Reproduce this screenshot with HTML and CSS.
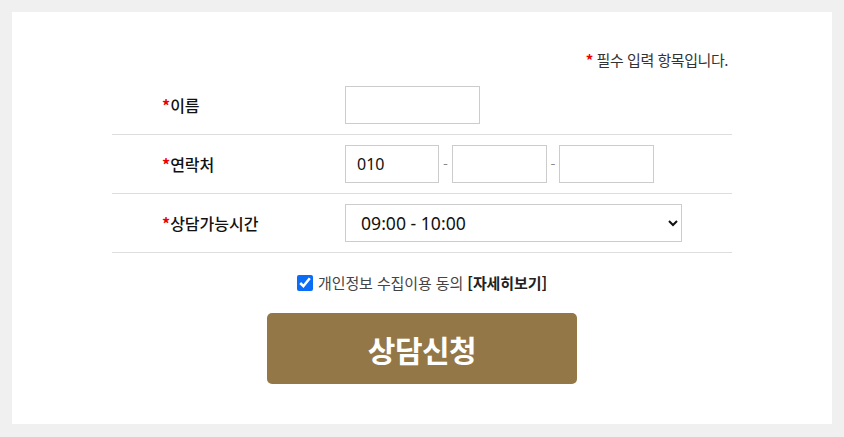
FILE: index.html
```html
<!DOCTYPE html>
<html lang="ko">
<head>
<meta charset="utf-8">
<link rel="stylesheet" href="styles.css">
</head>
<body>
<div class="panel">
  <div class="form">
    <p class="note"><span class="star">*</span> 필수 입력 항목입니다.</p>
    <div class="row">
      <div class="label"><span class="star">*</span>이름</div>
      <div class="field"><input class="inp name" type="text"></div>
    </div>
    <div class="row">
      <div class="label"><span class="star">*</span>연락처</div>
      <div class="field">
        <input class="inp tel first" type="text" value="010">
        <span class="dash">-</span>
        <input class="inp tel" type="text">
        <span class="dash last">-</span>
        <input class="inp tel" type="text">
      </div>
    </div>
    <div class="row">
      <div class="label"><span class="star">*</span>상담가능시간</div>
      <div class="field">
        <select class="sel"><option>09:00 - 10:00</option></select>
      </div>
    </div>
    <div class="agree">
      <input type="checkbox" class="chk" checked>
      <span>개인정보 수집이용 동의 <b>[자세히보기]</b></span>
    </div>
    <div class="btnwrap"><button class="submit">상담신청</button></div>
  </div>
</div>
</body>
</html>
```
FILE: styles.css
```css
* { box-sizing: border-box; }
html, body { margin: 0; padding: 0; }
body {
  background: #f0f0f0;
  padding: 12px;
  font-family: "Noto Sans CJK KR", "Noto Sans", sans-serif;
  color: #222;
}
.panel {
  background: #fff;
  width: 820px;
  height: 412px;
  padding: 36px 100px 0;
}
.form { width: 620px; }
.note {
  margin: 0 4px 4px 0;
  text-align: right;
  font-size: 15px;
  line-height: 24px;
  color: #333;
  letter-spacing: -0.45px;
}
.star { color: #e00; font-weight: 700; }
.row {
  display: flex;
  align-items: center;
  padding: 10px 0;
  border-bottom: 1px solid #ddd;
}
.label {
  width: 233px;
  padding-left: 50px;
  font-size: 16px;
  font-weight: 500;
  color: #111;
}
.field { display: flex; align-items: center; }
.inp {
  height: 38px;
  border: 1px solid #ccc;
  border-radius: 0;
  padding: 0 11px;
  font-family: "Noto Sans", "Noto Sans CJK KR", sans-serif;
  font-size: 16px;
  color: #111;
  outline: none;
  margin: 0;
}
.name { width: 135px; }
.tel { width: 95px; }
.tel.first { width: 94px; }
.dash { width: 13px; text-align: center; color: #888; font-size: 14px; }
.dash.last { width: 12px; }
.sel {
  width: 337px;
  height: 38px;
  border: 1px solid #ccc;
  border-radius: 0;
  background: #fff;
  padding: 0 11px;
  font-family: "Noto Sans", "Noto Sans CJK KR", sans-serif;
  font-size: 17.6px;
  color: #111;
}
.agree {
  display: flex;
  align-items: center;
  justify-content: center;
  margin-top: 19px;
  font-size: 15px;
  color: #444;
  letter-spacing: -0.1px;
}
.agree b { color: #222; font-weight: 700; }
.chk { width: 16px; height: 16px; margin: 0 5px 0 0; accent-color: #0b6cf7; }
.btnwrap { display: flex; justify-content: center; margin-top: 20px; }
.submit {
  width: 310px;
  height: 71px;
  border: 0;
  border-radius: 5px;
  background: #937747;
  color: #fff;
  font-family: "Noto Sans CJK KR", sans-serif;
  font-size: 30px;
  font-weight: 700;
  letter-spacing: -0.5px;
  cursor: pointer;
}
```
